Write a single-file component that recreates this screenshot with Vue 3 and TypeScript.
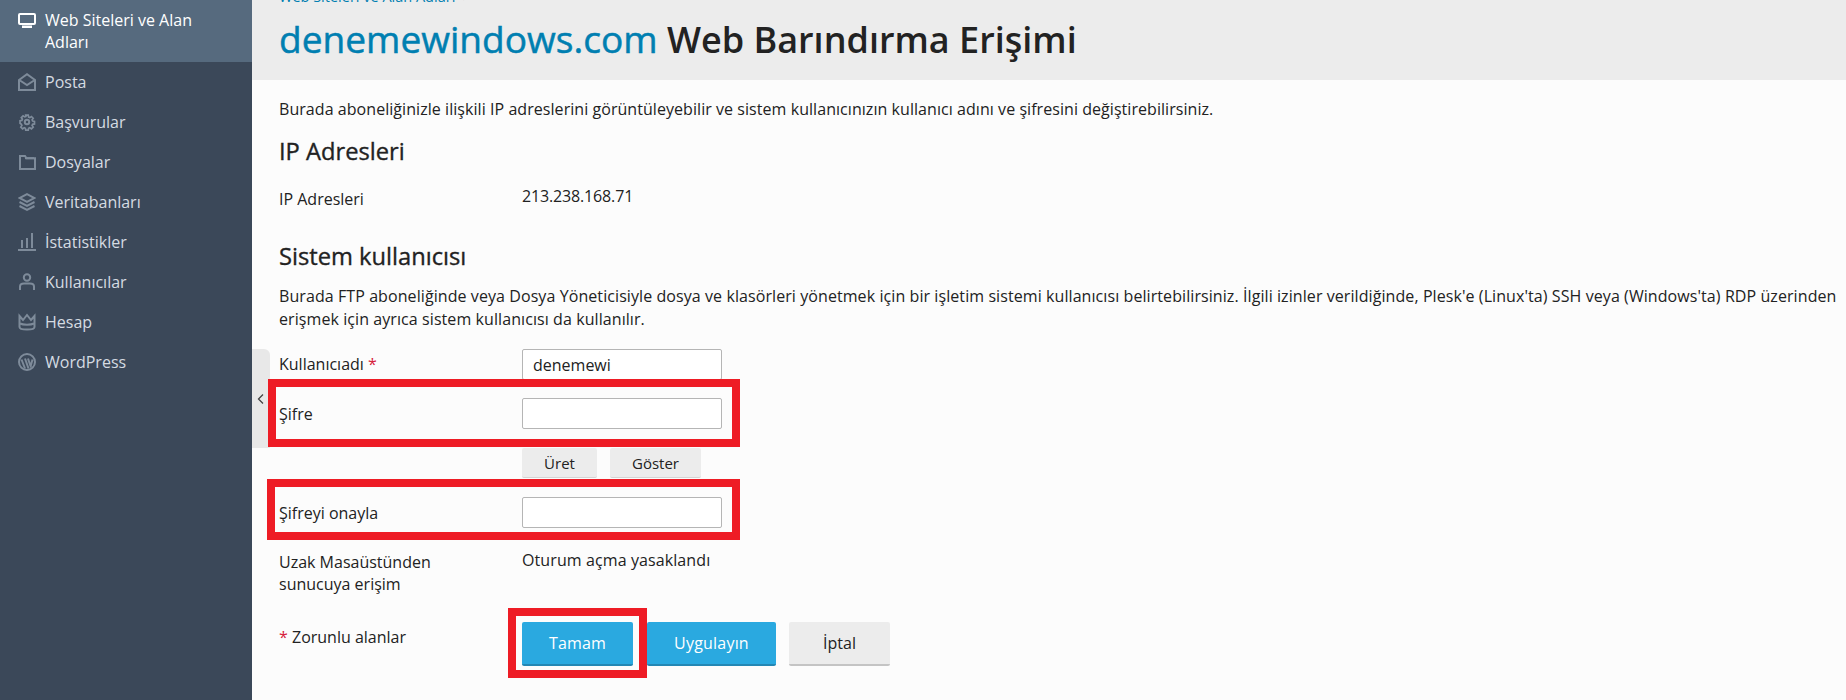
<script setup lang="ts">
interface Item { label: string; icon: string }
const items: Item[] = [
  { label: 'Posta', icon: 'mail' },
  { label: 'Başvurular', icon: 'gear' },
  { label: 'Dosyalar', icon: 'folder' },
  { label: 'Veritabanları', icon: 'stack' },
  { label: 'İstatistikler', icon: 'chart' },
  { label: 'Kullanıcılar', icon: 'user' },
  { label: 'Hesap', icon: 'crown' },
  { label: 'WordPress', icon: 'wp' },
]
</script>

<template>
  <div class="page">
    <aside class="sidebar">
      <div class="active">
        <svg class="icon" viewBox="0 0 18 18" width="18" height="18" fill="none">
          <rect x="1" y="3" width="16" height="10" rx="1" stroke="#fff" stroke-width="2" />
          <rect x="4" y="14.500" width="10" height="2.500" fill="#fff" />
        </svg>
        <span>Web Siteleri ve Alan Adları</span>
      </div>
      <div v-for="it in items" :key="it.label" class="item">
        <svg class="icon" viewBox="0 0 18 18" width="18" height="18" fill="none" stroke="#7e8b9a" stroke-width="2">
          <template v-if="it.icon === 'mail'">
            <path d="M1 7 9 1.200 17 7v10H1z" />
            <path d="M2 7.500 9 12l7-4.500" />
          </template>
          <template v-else-if="it.icon === 'gear'">
            <circle cx="9" cy="9" r="2.200" />
            <path d="M7.500 1h3l.4 2.200 1.400.6 1.900-1.300 2.100 2.100-1.300 1.900.6 1.400 2.200.4v3l-2.200.4-.6 1.400 1.300 1.900-2.100 2.100-1.900-1.300-1.400.6-.4 2.200h-3l-.4-2.200-1.400-.6-1.900 1.300-2.100-2.100 1.300-1.900-.6-1.400L.8 10.500v-3l2.200-.4.6-1.400-1.300-1.900 2.100-2.100 1.900 1.300 1.400-.6z" transform="translate(1.350 1.350) scale(.85)" />
          </template>
          <template v-else-if="it.icon === 'folder'">
            <path d="M2 3h5l1.500 2.200H17V16H2z" />
            <path d="M7 5.200h9" />
          </template>
          <template v-else-if="it.icon === 'stack'">
            <path d="M9 1.200 16.500 5 9 8.800 1.500 5z" />
            <path d="M1.500 9 9 12.800 16.500 9" />
            <path d="M1.500 13 9 16.800l7.500-3.800" />
          </template>
          <template v-else-if="it.icon === 'chart'">
            <path d="M0 17h18" />
            <path d="M4 15V7M9 15V5M14 15V0" />
          </template>
          <template v-else-if="it.icon === 'user'">
            <circle cx="9" cy="4.500" r="3.200" />
            <path d="M2 17v-3.500c0-2 2-3 4-3h6c2 0 4 1 4 3V17" />
          </template>
          <template v-else-if="it.icon === 'crown'">
            <path d="M1.500 3 5 7l4-5 4 5 3.500-4v11c0 1.500-2 2.500-7.500 2.500S1.500 15.500 1.500 14z" />
            <path d="M2 10.500c3 1.500 11 1.500 14 0" />
          </template>
          <template v-else>
            <circle cx="9" cy="9" r="8" />
            <path d="M3.500 6.500 7 15.500M7 5.500 10.500 15.500M10 5.500l3 9M14.500 6.500l-2 7" />
          </template>
        </svg>
        <span>{{ it.label }}</span>
      </div>
    </aside>
    <main class="main">
      <div class="collapse">
        <svg viewBox="0 0 8 12" width="8" height="12" fill="none" stroke="#444" stroke-width="1.300"><path d="M6 1.500 1.500 6 6 10.500" /></svg>
      </div>
      <header class="head">
        <div class="crumb">Web Siteleri ve Alan Adları &nbsp;<span class="sep">&gt;</span></div>
        <h1><span class="dom">denemewindows.com</span> Web Barındırma Erişimi</h1>
      </header>
      <section class="body">
        <p class="intro">Burada aboneliğinizle ilişkili IP adreslerini görüntüleyebilir ve sistem kullanıcınızın kullanıcı adını ve şifresini değiştirebilirsiniz.</p>
        <h2 class="h-ip">IP Adresleri</h2>
        <div class="row r-ip"><label>IP Adresleri</label><div>213.238.168.71</div></div>
        <h2 class="h-sys">Sistem kullanıcısı</h2>
        <p class="desc">Burada FTP aboneliğinde veya Dosya Yöneticisiyle dosya ve klasörleri yönetmek için bir işletim sistemi kullanıcısı belirtebilirsiniz. İlgili izinler verildiğinde, Plesk'e (Linux'ta) SSH veya (Windows'ta) RDP üzerinden<br />erişmek için ayrıca sistem kullanıcısı da kullanılır.</p>
        <div class="row r-user"><label>Kullanıcıadı <em>*</em></label><input class="inp" value="denemewi" /></div>
        <div class="row r-pass"><label>Şifre</label><input class="inp" type="text" /></div>
        <div class="row r-gen"><label></label><div class="gen"><button class="btn sm w1">Üret</button><button class="btn sm w2">Göster</button></div></div>
        <div class="row r-conf"><label>Şifreyi onayla</label><input class="inp" type="text" /></div>
        <div class="row r-rdp"><label>Uzak Masaüstünden<br />sunucuya erişim</label><div>Oturum açma yasaklandı</div></div>
        <div class="row r-act">
          <label><em>*</em> Zorunlu alanlar</label>
          <div class="acts">
            <button class="btn pri ok">Tamam</button>
            <button class="btn pri ap">Uygulayın</button>
            <button class="btn can">İptal</button>
          </div>
        </div>
      </section>
      <div class="mark m1"></div>
      <div class="mark m2"></div>
      <div class="mark m3"></div>
    </main>
  </div>
</template>

<style>
html, body { margin: 0; height: 700px; overflow: hidden; background: #fcfcfc; }
</style>

<style scoped>
.page { display: flex; height: 700px; overflow: hidden; font-family: "Open Sans", sans-serif; font-size: 16px; color: #222; }
.sidebar { width: 252px; flex: none; background: #3b4859; color: #d5dbe2; }
.active { height: 62px; background: #566a7e; color: #fff; display: flex; padding: 9px 18px 0; box-sizing: border-box; line-height: 22px; }
.active .icon { margin-top: 2px; }
.active span { margin-left: 9px; width: 170px; }
.item { height: 40px; display: flex; align-items: center; padding-left: 18px; }
.item span { margin-left: 9px; }
.icon { flex: none; }
.main { position: relative; flex: 1; min-width: 0; background: #fcfcfc; }
.collapse { position: absolute; left: 0; top: 349px; width: 18px; height: 99px; background: #e8e8e8; border-top-right-radius: 6px; display: flex; align-items: center; justify-content: center; padding-right: 1px; box-sizing: border-box; }
.head { height: 80px; background: #ececec; padding-left: 27px; overflow: hidden; box-sizing: border-box; }
.crumb { margin-top: -12px; height: 18px; line-height: 18px; color: #007fb1; font-size: 14.500px; }
.sep { color: #999; }
h1 { margin: 11px 0 0; font-size: 36px; line-height: 44px; font-weight: 600; color: #222; white-space: nowrap; }
.dom { color: #007fb1; font-weight: 400; font-size: 37.100px; -webkit-text-stroke: .5px #007fb1; }
.body { padding-left: 27px; }
p { margin: 0; line-height: 24px; }
.intro { margin-top: 17px; white-space: nowrap; letter-spacing: .055px; }
h2 { margin: 0; font-size: 23.700px; line-height: 28px; font-weight: 400; -webkit-text-stroke: .35px #222; }
.h-ip { margin-top: 16px; }
.row { display: flex; }
.row label { width: 243px; flex: none; line-height: 22px; }
.row em { color: #d6203a; font-style: normal; }
.r-ip { margin-top: 22px; }
.r-ip label { padding-top: 1px; }
.r-ip > div { margin-top: -2px; line-height: 22px; letter-spacing: -.15px; }
.h-sys { margin-top: 32px; }
.desc { margin-top: 15px; white-space: nowrap; letter-spacing: .08px; line-height: 23px; }
.inp { width: 200px; height: 31px; box-sizing: border-box; border: 1px solid #b5b5b5; border-radius: 2px; background: #fff; padding: 0 10px; font: inherit; color: #222; outline: none; }
.r-user { position: absolute; top: 349px; left: 27px; }
.r-user label { padding-top: 4px; }
.r-pass { position: absolute; top: 398px; left: 27px; }
.r-pass label { padding-top: 5px; }
.r-gen { position: absolute; top: 448px; left: 27px; }
.r-conf { position: absolute; top: 497px; left: 27px; }
.r-conf label { padding-top: 5px; }
.r-rdp { position: absolute; top: 551px; left: 27px; }
.r-rdp > div { margin-top: -2px; line-height: 22px; letter-spacing: .1px; }
.r-act { position: absolute; top: 622px; left: 27px; }
.r-act label { padding-top: 4px; }
.gen { display: flex; gap: 13px; }
.acts { display: flex; }
.btn { border: 0; border-radius: 2px; font: inherit; padding: 0; cursor: pointer; box-sizing: border-box; }
.sm { height: 30px; background: #ececec; border-bottom: 1px solid #d4d4d4; font-size: 15px; color: #222; }
.w1 { width: 75px; }
.w2 { width: 91px; }
.pri { height: 44px; background: #2aa9e0; color: #fff; border-bottom: 2px solid #2487b4; letter-spacing: .2px; }
.ok { width: 111px; margin-right: 14px; }
.ap { width: 129px; margin-right: 13px; }
.can { width: 101px; height: 44px; background: #ececec; border-bottom: 2px solid #c4c4c4; color: #222; }
.mark { position: absolute; border: 8px solid #ee1c25; box-sizing: border-box; pointer-events: none; }
.m1 { left: 16px; top: 379px; width: 472px; height: 68px; }
.m2 { left: 15px; top: 479px; width: 473px; height: 61px; }
.m3 { left: 256px; top: 608px; width: 139px; height: 70px; }
</style>
